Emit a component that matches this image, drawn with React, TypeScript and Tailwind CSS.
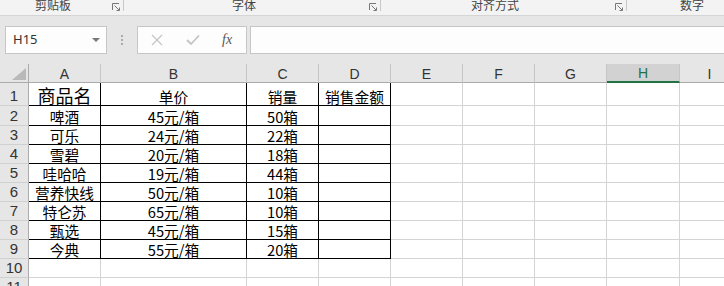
import React from "react";

const colW = [
  "w-[72px]",
  "w-[146px]",
  "w-[72px]",
  "w-[72px]",
  "w-[72px]",
  "w-[72px]",
  "w-[72px]",
  "w-[73px]",
  "w-[60px]",
];
const letters = ["A", "B", "C", "D", "E", "F", "G", "H", "I"];
const rowH = [
  "h-[23px]",
  "h-[20px]",
  "h-[19px]",
  "h-[19px]",
  "h-[19px]",
  "h-[19px]",
  "h-[19px]",
  "h-[19px]",
  "h-[19px]",
  "h-[19px]",
  "h-[19px]",
];

const data: string[][] = [
  ["商品名", "单价", "销量", "销售金额"],
  ["啤酒", "45元/箱", "50箱", ""],
  ["可乐", "24元/箱", "22箱", ""],
  ["雪碧", "20元/箱", "18箱", ""],
  ["哇哈哈", "19元/箱", "44箱", ""],
  ["营养快线", "50元/箱", "10箱", ""],
  ["特仑苏", "65元/箱", "10箱", ""],
  ["甄选", "45元/箱", "15箱", ""],
  ["今典", "55元/箱", "20箱", ""],
  ["", "", "", ""],
  ["", "", "", ""],
];

const cjk = "font-['Noto_Sans_CJK_SC',sans-serif]";

function Launcher() {
  return (
    <svg width="8" height="8" viewBox="0 0 8 8" className="mt-[3px] shrink-0">
      <path d="M0.5 7V0.5H7" stroke="#777" strokeWidth="1" fill="none" />
      <path d="M2.5 2.5L7 7" stroke="#777" strokeWidth="1" fill="none" />
      <path d="M7.5 4.5V7.5H4.5" stroke="#777" strokeWidth="1" fill="none" />
    </svg>
  );
}

export default function App() {
  return (
    <div className={`w-[724px] h-[286px] overflow-hidden bg-[#e6e6e6] flex flex-col ${cjk}`}>
      {/* Ribbon group labels */}
      <div className="h-[16px] shrink-0 bg-[#f3f3f3] border-b border-[#d5d5d5] flex overflow-hidden text-[12px] leading-[12px] text-[#444]">
        <div className="w-[124px] h-[11px] border-r border-[#c8c8c8] flex items-start shrink-0">
          <span className="ml-[35px] mt-[-1px]">剪贴板</span>
          <div className="ml-auto mr-[3px] flex">
            <Launcher />
          </div>
        </div>
        <div className="w-[257px] h-[11px] border-r border-[#c8c8c8] flex items-start shrink-0">
          <span className="ml-[108px] mt-[-1px]">字体</span>
          <div className="ml-auto mr-[3px] flex">
            <Launcher />
          </div>
        </div>
        <div className="w-[246px] h-[11px] border-r border-[#c8c8c8] flex items-start shrink-0">
          <span className="ml-[90px] mt-[-1px]">对齐方式</span>
          <div className="ml-auto mr-[3px] flex">
            <Launcher />
          </div>
        </div>
        <div className="flex-1 h-[11px] flex items-start">
          <span className="ml-[53px] mt-[-1px]">数字</span>
        </div>
      </div>

      {/* Formula bar */}
      <div className="h-[48px] shrink-0 flex items-start pt-[10px]">
        <div className="ml-[5px] w-[102px] h-[28px] bg-[#fdfdfd] border border-[#c6c6c6] flex items-center shrink-0">
          <span className="ml-[7px] text-[13px] text-[#333] font-['Noto_Sans',sans-serif]">H15</span>
          <svg width="8" height="4" viewBox="0 0 8 4" className="ml-auto mr-[6px]">
            <path d="M0 0H8L4 4Z" fill="#777" />
          </svg>
        </div>
        <div className="w-[30px] h-[28px] flex flex-col items-center justify-center gap-[2px] shrink-0">
          <div className="w-[2px] h-[2px] bg-[#aaa]" />
          <div className="w-[2px] h-[2px] bg-[#aaa]" />
          <div className="w-[2px] h-[2px] bg-[#aaa]" />
        </div>
        <div className="w-[110px] h-[28px] bg-[#fdfdfd] border border-[#c6c6c6] flex items-center shrink-0">
          <svg width="12" height="12" viewBox="0 0 12 12" className="ml-[13px]">
            <path d="M1 1L11 11M11 1L1 11" stroke="#c4c4c4" strokeWidth="1.2" />
          </svg>
          <svg width="14" height="12" viewBox="0 0 14 12" className="ml-[23px]">
            <path d="M1 6L5 10L13 1.5" stroke="#c4c4c4" strokeWidth="1.8" fill="none" />
          </svg>
          <span className="ml-[22px] text-[14px] italic text-[#555] font-['Liberation_Serif',serif] leading-none">
            fx
          </span>
        </div>
        <div className="ml-[3px] flex-1 h-[28px] bg-[#fdfdfd] border-y border-l border-[#c6c6c6]" />
      </div>

      {/* Sheet */}
      <div className="flex-1 flex flex-col bg-white">
        {/* Column headers */}
        <div className="h-[19px] shrink-0 flex bg-[#e6e6e6]">
          <div className="w-[29px] shrink-0 border-r border-b border-[#ababab] relative">
            <svg width="14" height="12" viewBox="0 0 14 12" className="absolute left-[12px] top-[4px]">
              <path d="M14 0V12H0Z" fill="#b9b9b9" />
            </svg>
          </div>
          {letters.map((l, i) => (
            <div
              key={l}
              className={`${colW[i]} shrink-0 flex items-end justify-center text-[14px] leading-[14px] font-['Liberation_Sans',sans-serif] ${
                l === "H"
                  ? "bg-[#d2d2d2] border-r border-r-[#c6c6c6] border-b-2 border-b-[#217346] text-[#217346] pb-[1px]"
                  : "border-r border-b border-r-[#c6c6c6] border-b-[#ababab] text-[#333] pb-[1px]"
              }`}
            >
              {l}
            </div>
          ))}
        </div>

        {data.map((row, r) => (
          <div key={r} className={`${rowH[r]} shrink-0 flex`}>
            <div className="w-[29px] shrink-0 bg-[#e6e6e6] border-r border-r-[#ababab] border-b border-b-[#d0d0d0] flex items-end justify-center text-[15px] leading-[15px] pb-[2px] text-[#333] font-['Liberation_Sans',sans-serif]">
              {r + 1}
            </div>
            {letters.map((l, c) => {
              const inTable = c < 4 && r < 9;
              const text = c < 4 ? row[c] : "";
              const big = r === 0 && c === 0;
              return (
                <div
                  key={l}
                  className={`${colW[c]} shrink-0 border-r border-b ${
                    inTable ? "border-black" : "border-[#d4d4d4]"
                  } flex items-end justify-center text-black ${
                    big ? "text-[18px] leading-[18px] pb-[1px]" : "text-[14.7px] leading-[15px] pb-[1px]"
                  } whitespace-nowrap`}
                >
                  {text}
                </div>
              );
            })}
          </div>
        ))}
      </div>
    </div>
  );
}
